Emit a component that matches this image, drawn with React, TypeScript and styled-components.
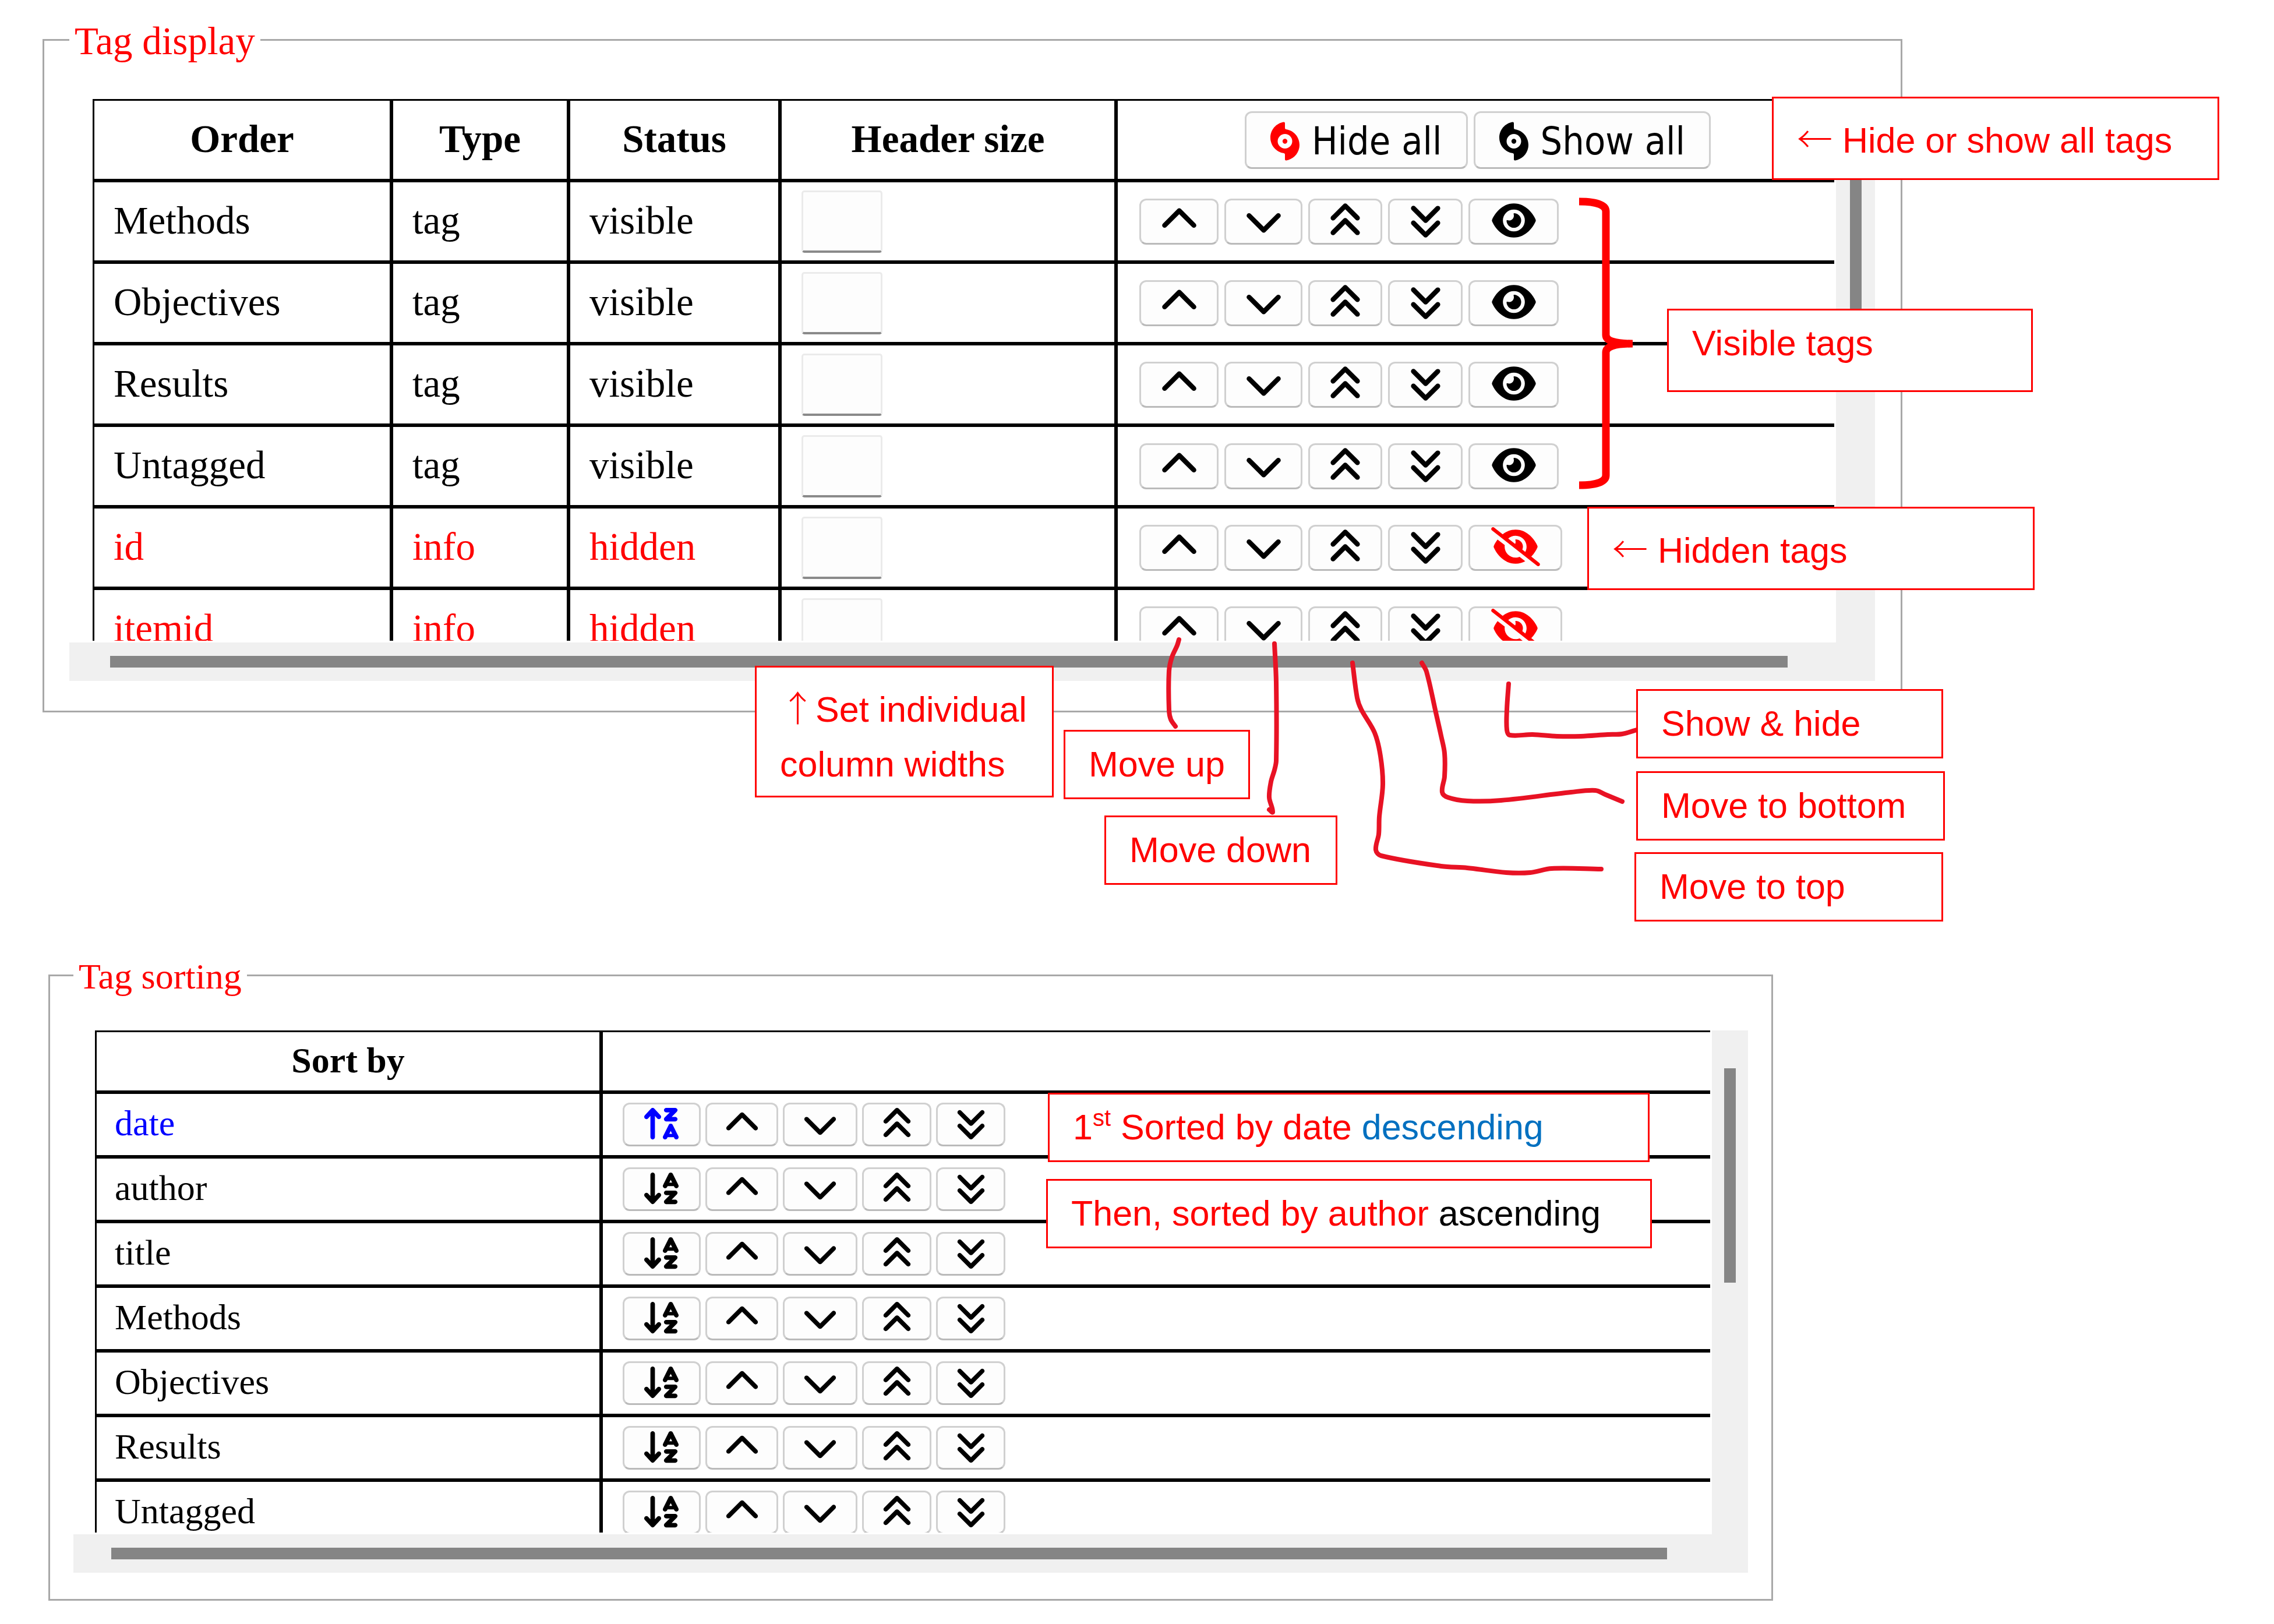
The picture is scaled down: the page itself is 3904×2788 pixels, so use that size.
import React from 'react';
import styled, { createGlobalStyle } from 'styled-components';
import {
  FaAnglesDown,
  FaAnglesUp,
  FaArrowDownAZ,
  FaArrowUpZA,
  FaChevronDown,
  FaChevronUp,
  FaEye,
  FaEyeSlash,
  FaHurricane,
} from 'react-icons/fa6';

const RED = '#ff0000';
const BLUE = '#0000ff';
const INK = '#e81224';

const GlobalStyle = createGlobalStyle`
  *, *::before, *::after { box-sizing: border-box; }
  body {
    margin: 0;
    background: #fff;
    color: #000;
    font-family: "Liberation Serif", "Times New Roman", serif;
  }
`;

const Page = styled.main`
  position: relative;
  display: flex;
  flex-direction: column;
  align-items: flex-start;
  gap: 413px;
  padding: 30px 73px 43px;
`;

/* ---------- panels ---------- */

const Panel = styled.fieldset<{ $size: number; $width: number; $indent?: number; $pad: string }>`
  width: min(100%, ${(p) => p.$width}px);
  min-width: 0;
  margin: 0 0 0 ${(p) => p.$indent ?? 0}px;
  padding: ${(p) => p.$pad};
  border: 3px solid #a8a8a8;
  font-size: ${(p) => p.$size}px;
`;

const Legend = styled.legend`
  padding: 4px 9px 0;
  line-height: 72px;
  color: ${RED};
`;

const ScrollArea = styled.div<{ $bar: number }>`
  display: grid;
  grid-template-columns: minmax(0, 1fr) ${(p) => p.$bar}px;
  background: #f0f0f0;
`;

const Viewport = styled.div<{ $height: number; $inset: number }>`
  height: ${(p) => p.$height}px;
  padding-left: ${(p) => p.$inset}px;
  overflow: hidden;
  background: #fff;
  border: solid #fff;
  border-width: 0 3px 3px 0;
`;

const Track = styled.div<{ $vertical?: boolean; $pad: string }>`
  display: flex;
  flex-direction: ${(p) => (p.$vertical ? 'row' : 'column')};
  justify-content: center;
  height: ${(p) => (p.$vertical ? 'auto' : '66px')};
  padding: ${(p) => p.$pad};
`;

const Thumb = styled.div<{ $length?: number }>`
  flex: 0 0 20px;
  height: ${(p) => (p.$length ? `${p.$length}px` : 'auto')};
  background: #858585;
`;

/* ---------- tables ---------- */

const Table = styled.table<{ $width: number }>`
  width: ${(p) => p.$width}px;
  table-layout: fixed;
  border-collapse: separate;
  border-spacing: 0;
`;

const Row = styled.tr<{ $height: number; $color?: string }>`
  height: ${(p) => p.$height}px;
  color: ${(p) => p.$color ?? '#000'};
`;

const HeadCell = styled.th`
  padding: 0 33px 5px;
  border: 3px solid #000;
  line-height: 76px;
  font-weight: bold;
  text-align: center;
`;

const TextCell = styled.td<{ $pad: number }>`
  padding: 0 ${(p) => p.$pad}px 5px;
  border: 3px solid #000;
  line-height: 76px;
`;

const ControlCell = styled.td<{ $pad: number }>`
  padding: 0 0 0 ${(p) => p.$pad}px;
  border: 3px solid #000;
`;

const ControlHead = styled.th`
  padding: 0;
  border: 3px solid #000;
`;

const SizeInput = styled.input`
  display: block;
  width: 139px;
  height: 107px;
  padding: 0 12px;
  border: 3px solid #ebebeb;
  border-bottom: 4px solid #8a8a8a;
  border-radius: 5px;
  background: #fdfdfd;
  font: inherit;
`;

const Actions = styled.div<{ $gap: number; $centered?: boolean }>`
  display: flex;
  align-items: center;
  justify-content: ${(p) => (p.$centered ? 'center' : 'flex-start')};
  gap: ${(p) => p.$gap}px;
`;

const Button = styled.button`
  display: flex;
  align-items: center;
  justify-content: center;
  border: 3px solid #d0d0d0;
  border-bottom-color: #bababa;
  border-radius: 12px;
  background: #fdfdfd;
  color: #000;
`;

const IconButton = styled(Button)<{
  $width: number;
  $height: number;
  $size: number;
  $iconWidth?: number;
  $color?: string;
}>`
  width: ${(p) => p.$width}px;
  height: ${(p) => p.$height}px;
  padding: 0 0 4px;
  color: ${(p) => p.$color ?? '#000'};

  svg {
    flex: none;
    width: ${(p) => p.$iconWidth ?? p.$size}px;
    height: ${(p) => p.$size}px;
  }
`;

const LabelButton = styled(Button)<{ $iconColor: string }>`
  height: 99px;
  gap: 21px;
  padding: 4px 41px 0;
  font-family: "DejaVu Sans Condensed", "Noto Sans", sans-serif;
  font-size: 66px;
  line-height: 77px;
  white-space: nowrap;

  svg {
    flex: none;
    width: 50px;
    height: 67px;
    color: ${(p) => p.$iconColor};
  }
`;

/* ---------- annotations ---------- */

const Callout = styled.aside<{ $x: number; $y: number; $w: number; $h: number; $tall?: boolean }>`
  position: absolute;
  left: ${(p) => p.$x}px;
  top: ${(p) => p.$y}px;
  width: ${(p) => p.$w}px;
  min-height: ${(p) => p.$h}px;
  padding: ${(p) => (p.$tall ? 25 : 9)}px 0 0 40px;
  border: 3px solid ${RED};
  background: #fff;
  color: ${RED};
  font-family: "Liberation Sans", Arial, sans-serif;
  font-size: 61px;
  line-height: 94px;
  white-space: pre;

  sup {
    font-size: 40px;
    line-height: 0;
    vertical-align: 23px;
  }
`;

const Tint = styled.span<{ $color: string }>`
  color: ${(p) => p.$color};
`;

const Arrow = styled.span`
  font-family: "Noto Sans CJK SC", "Liberation Sans", sans-serif;
  font-weight: 300;
  line-height: 0;
`;

const InkLayer = styled.svg`
  position: absolute;
  left: 0;
  top: 0;
  width: 2900px;
  height: 1600px;
  fill: none;
  pointer-events: none;
`;

type Point = [number, number];

/* Rounds a hand-drawn stroke through its sample points. */
function smooth(points: Point[]): string {
  let d = `M${points[0][0]} ${points[0][1]}`;
  for (let i = 0; i < points.length - 1; i += 1) {
    const p0 = points[Math.max(i - 1, 0)];
    const p1 = points[i];
    const p2 = points[i + 1];
    const p3 = points[Math.min(i + 2, points.length - 1)];
    const reach = Math.hypot(p2[0] - p1[0], p2[1] - p1[1]) / 3;
    const unit = (a: Point, b: Point): Point => {
      const len = Math.hypot(b[0] - a[0], b[1] - a[1]) || 1;
      return [((b[0] - a[0]) / len) * reach, ((b[1] - a[1]) / len) * reach];
    };
    const t1 = unit(p0, p2);
    const t2 = unit(p1, p3);
    d += `C${p1[0] + t1[0]} ${p1[1] + t1[1]} ${p2[0] - t2[0]} ${p2[1] - t2[1]} ${p2[0]} ${p2[1]}`;
  }
  return d;
}

const strokes: Point[][] = [
  [[2024, 1098], [2021, 1108], [2012, 1128], [2007, 1152], [2007, 1219], [2010, 1235], [2018, 1247]],
  [[2188, 1105], [2191, 1172], [2191, 1306], [2188, 1322], [2182, 1342], [2179, 1369], [2185, 1394], [2179, 1390]],
  [[2322, 1138], [2330, 1198], [2337, 1218], [2360, 1258], [2370, 1298], [2374, 1347], [2368, 1402], [2367, 1432],
    [2362, 1459], [2371, 1469], [2474, 1487], [2519, 1490], [2586, 1498], [2627, 1498], [2664, 1491], [2749, 1492]],
  [[2441, 1138], [2449, 1153], [2465, 1223], [2474, 1263], [2480, 1293], [2480, 1333], [2476, 1360], [2486, 1369],
    [2519, 1375], [2577, 1374], [2697, 1360], [2739, 1357], [2756, 1364], [2785, 1376]],
  [[2590, 1174], [2587, 1218], [2587, 1253], [2592, 1262], [2631, 1261], [2673, 1264], [2714, 1264], [2760, 1261],
    [2785, 1260], [2813, 1252]],
];

/* ---------- data ---------- */

const displayRows = [
  { name: 'Methods', type: 'tag', hidden: false },
  { name: 'Objectives', type: 'tag', hidden: false },
  { name: 'Results', type: 'tag', hidden: false },
  { name: 'Untagged', type: 'tag', hidden: false },
  { name: 'id', type: 'info', hidden: true },
  { name: 'itemid', type: 'info', hidden: true },
];

const sortRows = [
  { name: 'date', descending: true },
  { name: 'author', descending: false },
  { name: 'title', descending: false },
  { name: 'Methods', descending: false },
  { name: 'Objectives', descending: false },
  { name: 'Results', descending: false },
  { name: 'Untagged', descending: false },
];

const moves = [
  { label: 'Move up', Icon: FaChevronUp, wide: 136, narrow: 125 },
  { label: 'Move down', Icon: FaChevronDown, wide: 134, narrow: 128 },
  { label: 'Move to top', Icon: FaAnglesUp, wide: 127, narrow: 119 },
  { label: 'Move to bottom', Icon: FaAnglesDown, wide: 128, narrow: 119 },
];

function TagDisplay() {
  return (
    <Panel $size={67} $width={3193} $pad="64px 44px 51px 43px">
      <Legend>Tag display</Legend>
      <ScrollArea $bar={67}>
        <Viewport $height={933} $inset={40}>
          <Table $width={2999}>
            <colgroup>
              <col style={{ width: 513 }} />
              <col style={{ width: 304 }} />
              <col style={{ width: 363 }} />
              <col style={{ width: 577 }} />
              <col />
            </colgroup>
            <thead>
              <Row $height={140}>
                <HeadCell>Order</HeadCell>
                <HeadCell>Type</HeadCell>
                <HeadCell>Status</HeadCell>
                <HeadCell>Header size</HeadCell>
                <ControlHead>
                  <Actions $gap={10} $centered>
                    <LabelButton type="button" $iconColor={RED}>
                      <FaHurricane />
                      Hide all
                    </LabelButton>
                    <LabelButton type="button" $iconColor="#000">
                      <FaHurricane />
                      Show all
                    </LabelButton>
                  </Actions>
                </ControlHead>
              </Row>
            </thead>
            <tbody>
              {displayRows.map((row) => (
                <Row key={row.name} $height={140} $color={row.hidden ? RED : undefined}>
                  <TextCell $pad={33}>{row.name}</TextCell>
                  <TextCell $pad={33}>{row.type}</TextCell>
                  <TextCell $pad={33}>{row.hidden ? 'hidden' : 'visible'}</TextCell>
                  <ControlCell $pad={34}>
                    <SizeInput type="text" aria-label={`Header size of ${row.name}`} />
                  </ControlCell>
                  <ControlCell $pad={37}>
                    <Actions $gap={10}>
                      {moves.map(({ label, Icon, wide }) => (
                        <IconButton key={label} type="button" aria-label={label} $width={wide} $height={79} $size={67}>
                          <Icon />
                        </IconButton>
                      ))}
                      <IconButton
                        type="button"
                        aria-label={row.hidden ? 'Show' : 'Hide'}
                        $width={row.hidden ? 161 : 155}
                        $height={79}
                        $size={67}
                        $iconWidth={row.hidden ? 84 : 76}
                        $color={row.hidden ? RED : undefined}
                      >
                        {row.hidden ? <FaEyeSlash /> : <FaEye />}
                      </IconButton>
                    </Actions>
                  </ControlCell>
                </Row>
              ))}
            </tbody>
          </Table>
        </Viewport>
        <Track $vertical $pad="65px 0 0">
          <Thumb $length={366} />
        </Track>
        <Track $pad="0 83px 0 70px">
          <Thumb />
        </Track>
      </ScrollArea>
    </Panel>
  );
}

function TagSorting() {
  return (
    <Panel $size={62} $width={2961} $indent={10} $pad="57px 40px 45px 40px">
      <Legend>Tag sorting</Legend>
      <ScrollArea $bar={62}>
        <Viewport $height={865} $inset={37}>
          <Table $width={2900}>
            <colgroup>
              <col style={{ width: 869 }} />
              <col />
            </colgroup>
            <thead>
              <Row $height={106}>
                <HeadCell>Sort by</HeadCell>
                <ControlHead />
              </Row>
            </thead>
            <tbody>
              {sortRows.map((row) => (
                <Row key={row.name} $height={111} $color={row.descending ? BLUE : undefined}>
                  <TextCell $pad={31}>{row.name}</TextCell>
                  <ControlCell $pad={34}>
                    <Actions $gap={8}>
                      <IconButton
                        type="button"
                        aria-label={row.descending ? 'Sorted descending' : 'Sorted ascending'}
                        $width={134}
                        $height={75}
                        $size={62}
                        $iconWidth={70}
                        $color={row.descending ? BLUE : undefined}
                      >
                        {row.descending ? <FaArrowUpZA /> : <FaArrowDownAZ />}
                      </IconButton>
                      {moves.map(({ label, Icon, narrow }) => (
                        <IconButton key={label} type="button" aria-label={label} $width={narrow} $height={75} $size={62}>
                          <Icon />
                        </IconButton>
                      ))}
                    </Actions>
                  </ControlCell>
                </Row>
              ))}
            </tbody>
          </Table>
        </Viewport>
        <Track $vertical $pad="65px 0 0">
          <Thumb $length={368} />
        </Track>
        <Track $pad="0 77px 0 65px">
          <Thumb />
        </Track>
      </ScrollArea>
    </Panel>
  );
}

export default function App() {
  return (
    <>
      <GlobalStyle />
      <Page>
        <TagDisplay />
        <TagSorting />

        <InkLayer viewBox="0 0 2900 1600" aria-hidden="true">
          <path
            d="M2711 346C2744 346 2757 353 2757 363V575C2757 585 2772 590 2803 590C2772 590 2757 595 2757 605V816C2757 826 2744 833 2711 833"
            stroke={RED}
            strokeWidth={13}
          />
          {strokes.map((points) => (
            <path
              key={points[0].join()}
              d={smooth(points)}
              stroke={INK}
              strokeWidth={8}
              strokeLinecap="round"
              strokeLinejoin="round"
            />
          ))}
        </InkLayer>

        <Callout $x={3042} $y={166} $w={768} $h={143} $tall>
          <Arrow>←</Arrow> Hide or show all tags
        </Callout>
        <Callout $x={2862} $y={530} $w={628} $h={143}>Visible tags</Callout>
        <Callout $x={2725} $y={870} $w={768} $h={143} $tall>
          <Arrow>←</Arrow> Hidden tags
        </Callout>
        <Callout $x={1296} $y={1143} $w={513} $h={226} $tall>
          <Arrow>↑</Arrow>
          {'Set individual\ncolumn widths'}
        </Callout>
        <Callout $x={1826} $y={1253} $w={320} $h={119}>Move up</Callout>
        <Callout $x={1896} $y={1400} $w={400} $h={119}>Move down</Callout>
        <Callout $x={2809} $y={1183} $w={527} $h={119}>Show &amp; hide</Callout>
        <Callout $x={2809} $y={1324} $w={530} $h={119}>Move to bottom</Callout>
        <Callout $x={2806} $y={1463} $w={530} $h={119}>Move to top</Callout>
        <Callout $x={1799} $y={1876} $w={1033} $h={119}>
          1<sup>st</sup> Sorted by date <Tint $color="#0070c0">descending</Tint>
        </Callout>
        <Callout $x={1796} $y={2024} $w={1040} $h={119}>
          Then, sorted by author <Tint $color="#000">ascending</Tint>
        </Callout>
      </Page>
    </>
  );
}
